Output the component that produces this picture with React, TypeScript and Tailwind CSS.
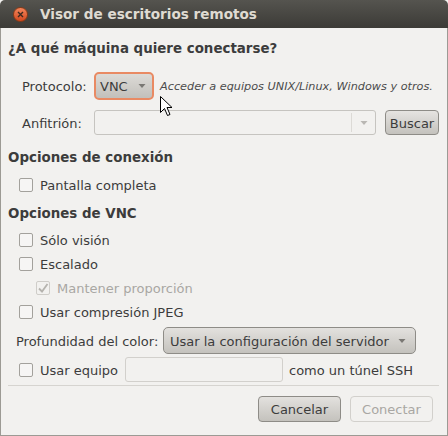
import React from 'react';

const Check: React.FC<{ checked?: boolean; disabled?: boolean }> = ({ checked, disabled }) => (
  <span
    className={`flex h-[14px] w-[14px] shrink-0 items-center justify-center rounded-[2px] border ${
      disabled ? 'border-[#cfcdc9] bg-[#f2f1ef]' : 'border-[#a3a19c] bg-[#f6f5f4]'
    }`}
  >
    {checked && (
      <svg width="12" height="12" viewBox="0 0 12 12">
        <path d="M2 6.5 L5 9.5 L10.5 2" fill="none" stroke="#b5b3ae" strokeWidth="1.8" />
      </svg>
    )}
  </span>
);

const CheckRow: React.FC<{ label: string; checked?: boolean; disabled?: boolean; indent?: boolean }> = ({
  label,
  checked,
  disabled,
  indent,
}) => (
  <div className={`flex h-[20px] items-center gap-[7px] ${indent ? 'pl-[28px]' : 'pl-[11px]'}`}>
    <Check checked={checked} disabled={disabled} />
    <span className={`pt-[1px] ${disabled ? 'text-[#a9a7a3]' : 'text-[#3c3c3c]'}`}>{label}</span>
  </div>
);

const Arrow: React.FC = () => (
  <svg width="8" height="6" viewBox="0 0 8 6">
    <path d="M0.5 1 L7.5 1 L4 5 Z" fill="#7a7874" />
  </svg>
);

const App: React.FC = () => {
  return (
    <div className="relative flex h-[436px] w-[448px] flex-col bg-[#f2f1ef] font-['DejaVu_Sans',sans-serif] text-[13px] leading-none text-[#3c3c3c]">
      {/* title bar */}
      <div className="flex h-[28px] shrink-0 items-center rounded-t-[5px] bg-gradient-to-b from-[#55544f] to-[#3c3b37] px-[13px]">
        <span className="flex h-[15px] w-[15px] items-center justify-center rounded-full border border-[#8a3a16] bg-gradient-to-b from-[#f3845a] to-[#d2481d]">
          <svg width="7" height="7" viewBox="0 0 7 7">
            <path d="M1 1 L6 6 M6 1 L1 6" stroke="#3c2a20" strokeWidth="1.4" />
          </svg>
        </span>
        <span className="ml-[12px] pt-[1px] text-[13.6px] font-bold text-[#dfdbd2]">Visor de escritorios remotos</span>
      </div>

      {/* body */}
      <div className="flex flex-1 flex-col border-x border-b border-[#9c9a94] pl-[7px] pr-[8px]">
        <div className="mt-[10px] flex h-[20px] items-center pt-[1px] text-[13.4px] font-bold">¿A qué máquina quiere conectarse?</div>

        <div className="mt-[14px] flex h-[28px] items-center pl-[14px]">
          <span className="w-[72px] pt-[1px]">Protocolo:</span>
          <div className="flex h-[28px] w-[60px] items-center justify-between rounded-[5px] border-2 border-[#e98a63] bg-gradient-to-b from-[#dddbd7] to-[#c2c0bb] pl-[4px] pr-[6px]">
            <span className="pt-[1px]">VNC</span>
            <Arrow />
          </div>
          <span className="ml-[6px] whitespace-nowrap pt-[1px] text-[11.25px] italic text-[#4c4c4c]">Acceder a equipos UNIX/Linux, Windows y otros.</span>
        </div>

        <div className="mt-[10px] flex h-[25px] items-center pl-[14px]">
          <span className="w-[72px] pt-[1px]">Anfitrión:</span>
          <div className="flex h-[25px] w-[282px] items-center justify-end rounded-[3px] border border-[#c6c4c0] bg-[#f2f1ef]">
            <div className="flex h-[19px] w-[24px] items-center justify-center border-l border-[#dcdad6]">
              <svg width="8" height="6" viewBox="0 0 8 6">
                <path d="M0.5 1 L7.5 1 L4 5 Z" fill="#b9b7b3" />
              </svg>
            </div>
          </div>
          <button className="ml-[9px] flex h-[25px] w-[54px] items-center justify-center rounded-[4px] border border-[#8e8c87] bg-gradient-to-b from-[#e6e4e1] to-[#c4c2bd] pt-[1px] text-[#3c3c3c]">
            Buscar
          </button>
        </div>

        <div className="mt-[12px] flex h-[20px] items-center pt-[1px] text-[13.4px] font-bold">Opciones de conexión</div>
        <div className="mt-[8px]">
          <CheckRow label="Pantalla completa" />
        </div>

        <div className="mt-[8px] flex h-[20px] items-center pt-[1px] text-[13.4px] font-bold">Opciones de VNC</div>
        <div className="mt-[7px] flex flex-col gap-[4px]">
          <CheckRow label="Sólo visión" />
          <CheckRow label="Escalado" />
          <CheckRow label="Mantener proporción" checked disabled indent />
          <CheckRow label="Usar compresión JPEG" />
        </div>

        <div className="mt-[5px] flex h-[27px] items-center pl-[8px]">
          <span className="w-[147px] pt-[1px]">Profundidad del color:</span>
          <div className="flex h-[27px] w-[253px] items-center justify-between rounded-[5px] border border-[#8e8c87] bg-gradient-to-b from-[#e3e1de] to-[#c4c2bd] pl-[6px] pr-[9px]">
            <span className="whitespace-nowrap pt-[1px]">Usar la configuración del servidor</span>
            <Arrow />
          </div>
        </div>

        <div className="mt-[3px] flex h-[25px] items-center pl-[11px]">
          <Check />
          <span className="ml-[7px] w-[85px] pt-[1px]">Usar equipo</span>
          <div className="h-[25px] w-[158px] rounded-[3px] border border-[#d2d0cc] bg-[#f2f1ef]" />
          <span className="ml-[6px] whitespace-nowrap pt-[1px]">como un túnel SSH</span>
        </div>

        <div className="mt-[3px] border-t border-[#d6d4d0]" />

        <div className="mt-[10px] flex justify-end gap-[9px] pr-[6px]">
          <button className="flex h-[26px] w-[83px] items-center justify-center rounded-[4px] border border-[#8e8c87] bg-gradient-to-b from-[#e3e1de] to-[#c4c2bd] pt-[1px] text-[#3c3c3c]">
            Cancelar
          </button>
          <button className="flex h-[26px] w-[83px] items-center justify-center rounded-[4px] border border-[#d2d0cc] bg-[#f2f1ef] pt-[1px] text-[#a9a7a3]">
            Conectar
          </button>
        </div>
      </div>

      {/* mouse pointer */}
      <svg className="absolute left-[160px] top-[96px]" width="13" height="21" viewBox="0 0 13 21">
        <path d="M0.5 0.5 L0.5 16.5 L4.5 12.5 L7.5 19.5 L10 18.5 L7 11.5 L12 11.5 Z" fill="#ffffff" stroke="#000000" strokeWidth="1" strokeLinejoin="round" />
      </svg>
    </div>
  );
};

export default App;
